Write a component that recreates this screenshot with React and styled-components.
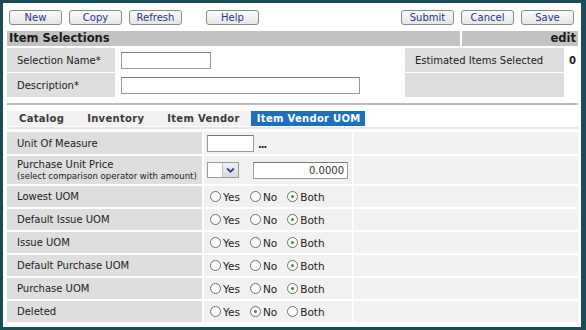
import React from 'react';
import styled, { createGlobalStyle } from 'styled-components';

const GlobalStyle = createGlobalStyle`
  html, body {
    margin: 0;
    padding: 0;
    background: #1c4b5c;
  }
  body {
    font-family: "DejaVu Sans", Verdana, sans-serif;
    font-size: 10px;
    color: #222;
  }
`;

const Frame = styled.div`
  width: 586px;
  height: 330px;
  box-sizing: border-box;
  border-style: solid;
  border-color: #1c4b5c;
  border-width: 3px 5px 3px 3px;
  background: #fff;
  padding: 0 3px 0 4px;
  overflow: hidden;
`;

const Toolbar = styled.div`
  display: flex;
  justify-content: space-between;
  align-items: center;
  height: 28px;
  padding: 0 4px 0 2px;
`;

const ButtonGroup = styled.div`
  display: flex;
  gap: 7px;
`;

const Button = styled.button`
  width: 53px;
  height: 15px;
  padding: 0;
  margin-left: ${p => (p.$gapLeft ? '17px' : '0')};
  border: 1px solid #8a8a8a;
  border-radius: 3px;
  background: linear-gradient(#fbfbfb, #e6e6e6);
  color: #27348b;
  font-family: "DejaVu Sans", Verdana, sans-serif;
  font-size: 10px;
  line-height: 13px;
`;

const SectionHeader = styled.div`
  display: grid;
  grid-template-columns: 1fr 116px;
  column-gap: 2px;
  height: 15px;
`;

const HeaderCell = styled.div`
  background: #c2c2c2;
  font-weight: bold;
  font-size: 11.5px;
  line-height: 15px;
  color: #1a1a1a;
  padding: 0 2px;
  text-align: ${p => p.$align || 'left'};
`;

const SelectionGrid = styled.div`
  display: grid;
  grid-template-columns: 108px 290px 159px 1fr;
  grid-auto-rows: 24px;
  row-gap: 1px;
  margin-top: 2px;
`;

const LabelCell = styled.div`
  background: #dedede;
  display: flex;
  flex-direction: column;
  justify-content: center;
  padding-left: 10px;
  color: #222;
`;

const PlainCell = styled.div`
  display: flex;
  align-items: center;
  padding-left: ${p => p.$pad || '6px'};
  font-weight: ${p => (p.$bold ? 'bold' : 'normal')};
`;

const TextInput = styled.input`
  box-sizing: border-box;
  width: ${p => p.$w}px;
  height: 17px;
  border: 1px solid #9a9a9a;
  border-top-color: #7a7a7a;
  background: #fff;
  margin: 0;
  padding: 0 3px;
  font-family: "DejaVu Sans", Verdana, sans-serif;
  font-size: 10px;
  text-align: ${p => p.$align || 'left'};
  color: #333;
`;

const Divider = styled.div`
  height: 2px;
  background: ${p => p.$color || '#bdbdbd'};
  margin: ${p => p.$m || '0'};
`;

const TabBar = styled.div`
  display: flex;
  height: 15px;
  margin-top: 6px;
`;

const Tab = styled.div`
  font-weight: bold;
  font-size: 10px;
  letter-spacing: 0.3px;
  line-height: 15px;
  padding: ${p => (p.$active ? '0 4px 0 6px' : '0 11px 0 12px')};
  background: ${p => (p.$active ? '#1e6fbf' : '#f1f1f1')};
  color: ${p => (p.$active ? '#fff' : '#3a3a3a')};
`;

const FormGrid = styled.div`
  display: grid;
  grid-template-columns: 195px 148px 1fr;
  grid-template-rows: 22px 28px repeat(6, 21px);
  column-gap: 2px;
  row-gap: 2px;
  margin-top: 3px;
`;

const ValueCell = styled.div`
  background: #f1f1f1;
  display: flex;
  align-items: center;
  padding-left: 3px;
`;

const FillCell = styled.div`
  background: #f2f2f2;
  margin-left: -1px;
  border-left: 1px solid #f8f8f8;
`;

const SmallNote = styled.span`
  font-size: 8.5px;
  margin-top: 1px;
`;

const Ellipsis = styled.span`
  font-weight: bold;
  font-size: 10px;
  margin-left: 4px;
  margin-top: 2px;
  letter-spacing: -1px;
`;

const SelectBox = styled.div`
  box-sizing: border-box;
  width: 32px;
  height: 16px;
  border: 1px solid #9a9a9a;
  background: #fff;
  display: flex;
  justify-content: flex-end;
  margin-right: 14px;
`;

const SelectArrow = styled.div`
  width: 15px;
  background: linear-gradient(#eef0f4, #d6dae2);
  border-left: 1px solid #c0c4cc;
  display: flex;
  align-items: center;
  justify-content: center;
`;

const RadioGroup = styled.div`
  display: flex;
  align-items: center;
  gap: 10px;
  padding-left: 3px;
`;

const RadioLabel = styled.label`
  display: flex;
  align-items: center;
  gap: 2px;
  font-size: 10.5px;
  color: #222;
`;

const RadioCircle = styled.span`
  box-sizing: border-box;
  width: 11px;
  height: 11px;
  border-radius: 50%;
  border: 1px solid #6f6f6f;
  background: #fff;
  display: flex;
  align-items: center;
  justify-content: center;
  &::after {
    content: '';
    width: 3px;
    height: 3px;
    border-radius: 50%;
    background: ${p => (p.$checked ? '#2f9a2f' : 'transparent')};
  }
`;

const Radio = ({ label, checked }) => (
  <RadioLabel>
    <RadioCircle $checked={checked} />
    {label}
  </RadioLabel>
);

const TriState = ({ value }) => (
  <RadioGroup>
    <Radio label="Yes" checked={value === 'Yes'} />
    <Radio label="No" checked={value === 'No'} />
    <Radio label="Both" checked={value === 'Both'} />
  </RadioGroup>
);

const triRows = [
  ['Lowest UOM', 'Both'],
  ['Default Issue UOM', 'Both'],
  ['Issue UOM', 'Both'],
  ['Default Purchase UOM', 'Both'],
  ['Purchase UOM', 'Both'],
  ['Deleted', 'No'],
];

export default function App() {
  return (
    <>
      <GlobalStyle />
      <Frame>
        <Toolbar>
          <ButtonGroup>
            <Button>New</Button>
            <Button>Copy</Button>
            <Button>Refresh</Button>
            <Button $gapLeft>Help</Button>
          </ButtonGroup>
          <ButtonGroup>
            <Button>Submit</Button>
            <Button>Cancel</Button>
            <Button>Save</Button>
          </ButtonGroup>
        </Toolbar>

        <SectionHeader>
          <HeaderCell>Item Selections</HeaderCell>
          <HeaderCell $align="right">edit</HeaderCell>
        </SectionHeader>

        <SelectionGrid>
          <LabelCell>Selection Name*</LabelCell>
          <PlainCell><TextInput $w={90} /></PlainCell>
          <LabelCell>Estimated Items Selected</LabelCell>
          <PlainCell $bold $pad="5px">0</PlainCell>
          <LabelCell>Description*</LabelCell>
          <PlainCell><TextInput $w={239} /></PlainCell>
          <LabelCell />
          <PlainCell />
        </SelectionGrid>

        <Divider $m="6px 0 0" />

        <TabBar>
          <Tab>Catalog</Tab>
          <Tab>Inventory</Tab>
          <Tab>Item Vendor</Tab>
          <Tab $active>Item Vendor UOM</Tab>
        </TabBar>
        <Divider $m="1px 0 0" $color="#e6e6e6" />

        <FormGrid>
          <LabelCell>Unit Of Measure</LabelCell>
          <ValueCell>
            <TextInput $w={47} />
            <Ellipsis>...</Ellipsis>
          </ValueCell>
          <FillCell />

          <LabelCell>
            <span>Purchase Unit Price</span>
            <SmallNote>(select comparison operator with amount)</SmallNote>
          </LabelCell>
          <ValueCell>
            <SelectBox>
              <SelectArrow>
                <svg width="9" height="7" viewBox="0 0 9 7">
                  <path d="M1.2 1.5 L4.5 4.8 L7.8 1.5" stroke="#2a3f8f" strokeWidth="1.8" fill="none" />
                </svg>
              </SelectArrow>
            </SelectBox>
            <TextInput $w={95} $align="right" defaultValue="0.0000" />
          </ValueCell>
          <FillCell />

          {triRows.map(([label, value]) => (
            <React.Fragment key={label}>
              <LabelCell>{label}</LabelCell>
              <ValueCell>
                <TriState value={value} />
              </ValueCell>
              <FillCell />
            </React.Fragment>
          ))}
        </FormGrid>
      </Frame>
    </>
  );
}
